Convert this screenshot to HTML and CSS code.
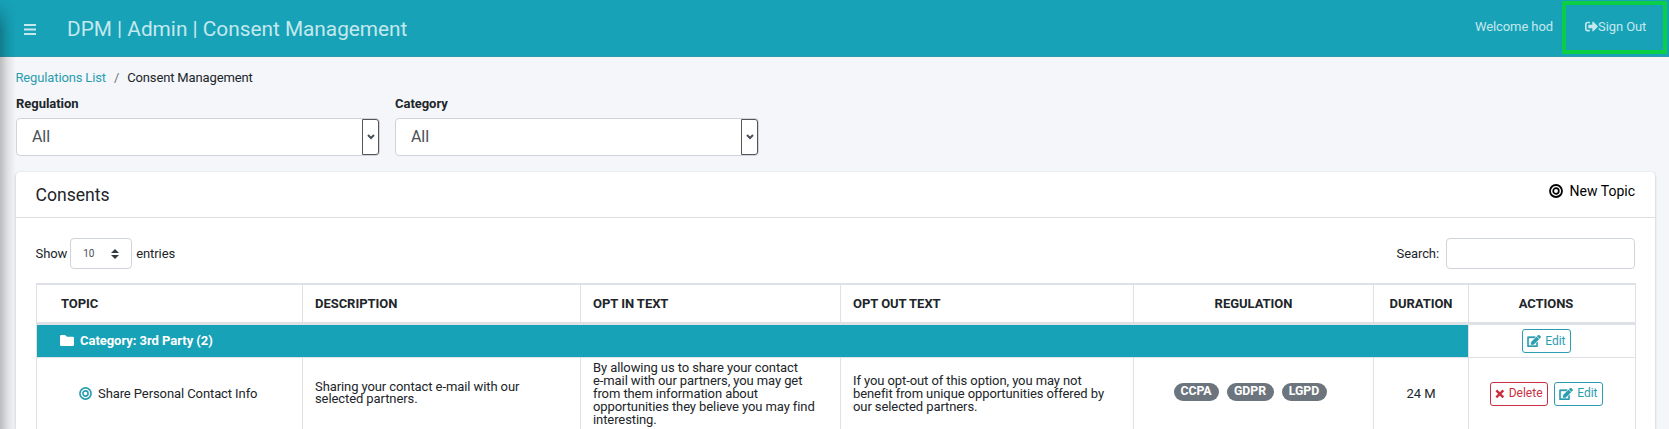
FILE: index.html
```html
<!DOCTYPE html>
<html lang="en">
<head>
<meta charset="utf-8">
<title>DPM | Admin | Consent Management</title>
<link rel="stylesheet" href="styles.css">
</head>
<body>
<svg class="defs" aria-hidden="true">
  <symbol id="target" viewBox="0 0 14 14"><g fill="none" stroke="currentColor"><circle cx="7" cy="7" r="6" stroke-width="1.8"/><circle cx="7" cy="7" r="2.8" stroke-width="1.7"/></g></symbol>
  <symbol id="edit" viewBox="0 0 576 512"><path fill="currentColor" stroke="currentColor" stroke-width="14" d="M402.6 83.2l90.2 90.2c3.8 3.8 3.8 10 0 13.8L274.4 405.6l-92.8 10.300c-12.400 1.400-22.900-9.100-21.500-21.500l10.300-92.800L388.800 83.200c3.800-3.800 10-3.800 13.800 0zm162-22.900l-48.800-48.800c-15.200-15.200-39.900-15.200-55.200 0l-35.400 35.400c-3.800 3.800-3.800 10 0 13.800l90.200 90.200c3.800 3.800 10 3.800 13.800 0l35.400-35.400c15.200-15.300 15.200-40 0-55.200zM384 346.200V448H64V128h229.800c3.200 0 6.200-1.300 8.500-3.500l40-40c7.600-7.600 2.200-20.500-8.500-20.500H48C21.500 64 0 85.500 0 112v352c0 26.500 21.500 48 48 48h352c26.500 0 48-21.500 48-48V306.200c0-10.700-12.900-16-20.500-8.500l-40 40c-2.200 2.300-3.500 5.300-3.500 8.500z"/></symbol>
</svg>
<header class="topbar">
  <svg class="menu" viewBox="0 0 12 11"><path d="M0 1h12M0 5.500h12M0 10h12" stroke="currentColor" stroke-width="2"/></svg>
  <h1 class="title">DPM | Admin | Consent Management</h1>
  <span class="welcome">Welcome hod</span>
  <a class="signout"><svg class="exit" viewBox="0 0 512 512"><path fill="currentColor" d="M497 273L329 441c-15 15-41 4.500-41-17v-96H152c-13.300 0-24-10.700-24-24v-96c0-13.300 10.700-24 24-24h136V88c0-21.400 25.900-32 41-17l168 168c9.300 9.400 9.300 24.600 0 34zM192 436v-40c0-6.600-5.400-12-12-12H96c-17.700 0-32-14.300-32-32V160c0-17.700 14.300-32 32-32h84c6.600 0 12-5.400 12-12V76c0-6.600-5.400-12-12-12H96c-53 0-96 43-96 96v192c0 53 43 96 96 96h84c6.600 0 12-5.400 12-12z"/></svg><span class="signout-text">Sign Out</span></a>
</header>
<main class="content">
  <nav class="crumbs"><a class="crumb-link">Regulations List</a><span class="sep">/</span><span>Consent Management</span></nav>
  <section class="filters">
    <div class="field"><b class="label">Regulation</b><div class="select"><span class="value">All</span><span class="drop"><svg class="chev" viewBox="0 0 8 6"><path d="M1 1l3 3 3-3" fill="none" stroke="currentColor" stroke-width="2"/></svg></span></div></div>
    <div class="field"><b class="label">Category</b><div class="select"><span class="value">All</span><span class="drop"><svg class="chev" viewBox="0 0 8 6"><path d="M1 1l3 3 3-3" fill="none" stroke="currentColor" stroke-width="2"/></svg></span></div></div>
  </section>
  <section class="card">
    <div class="card-head"><h2 class="card-title">Consents</h2><a class="new"><svg class="new-icon"><use href="#target"/></svg><span>New Topic</span></a></div>
    <div class="tools">
      <span class="show">Show</span>
      <div class="length"><span>10</span><svg class="sort" viewBox="0 0 8 10"><path d="M0 4l4-4 4 4zM0 6l4 4 4-4z" fill="currentColor"/></svg></div>
      <span class="entries">entries</span>
      <span class="search-label">Search:</span><div class="search"></div>
    </div>
    <div class="table">
      <div class="row head">
        <b class="cell first">TOPIC</b><b class="cell">DESCRIPTION</b><b class="cell">OPT IN TEXT</b><b class="cell">OPT OUT TEXT</b><b class="cell mid">REGULATION</b><b class="cell mid">DURATION</b><b class="cell actions head-actions">ACTIONS</b>
      </div>
      <div class="row group">
        <b class="cell category"><svg class="folder" viewBox="0 0 14 11"><path fill="currentColor" d="M1.300 0H5.200L6.900 1.700H12.700Q14 1.700 14 3V9.700Q14 11 12.700 11H1.300Q0 11 0 9.700V1.300Q0 0 1.300 0Z"/></svg><span>Category: 3rd Party (2)</span></b>
        <div class="cell actions"><a class="btn"><svg class="edit"><use href="#edit"/></svg><span>Edit</span></a></div>
      </div>
      <div class="row item">
        <div class="cell topic"><svg class="topic-icon"><use href="#target"/></svg><span>Share Personal Contact Info</span></div>
        <div class="cell desc">Sharing your contact e-mail with our<br>selected partners.</div>
        <div class="cell">By allowing us to share your contact<br>e-mail with our partners, you may get<br>from them information about<br>opportunities they believe you may find<br>interesting.</div>
        <div class="cell">If you opt-out of this option, you may not<br>benefit from unique opportunities offered by<br>our selected partners.</div>
        <div class="cell mid badges"><b class="badge">CCPA</b><b class="badge wide">GDPR</b><b class="badge">LGPD</b></div>
        <div class="cell mid">24 M</div>
        <div class="cell actions"><a class="btn danger"><svg class="x" viewBox="0 0 10 10"><path d="M1.300 1.300l7 7M8.300 1.300l-7 7" stroke="currentColor" stroke-width="2.400"/></svg><span>Delete</span></a><a class="btn"><svg class="edit"><use href="#edit"/></svg><span>Edit</span></a></div>
      </div>
    </div>
  </section>
</main>
<div class="edge-shadow"></div>
</body>
</html>
```
FILE: styles.css
```css
* { box-sizing: border-box; }
body { margin: 0; height: 429px; overflow: hidden; position: relative; background: #f4f6f9; color: #212529; font: 13px/13px Roboto, sans-serif; letter-spacing: -.09px; }
b { letter-spacing: -.04px; }
svg { display: block; flex: none; }
.defs { position: absolute; width: 0; height: 0; }
.topbar { display: flex; align-items: center; height: 57px; padding-left: 24px; background: #17a2b8; color: #c5e8ed; border-bottom: 1px solid #2b9bae; }
.menu { width: 12px; height: 11px; margin-top: 2px; }
.title { margin: 2px 0 0 31px; font-weight: 400; font-size: 20.800px; line-height: 30px; letter-spacing: 0; white-space: nowrap; }
.welcome { margin: -3px 9px 0 auto; }
.signout { display: flex; align-items: center; width: 105px; height: 53px; margin: 1px 2px 2px 0; padding-left: 19px; border: 4px solid #0bce47; }
.exit { width: 13px; height: 13px; margin-top: -3px; }
.signout-text { margin-top: -3px; }
.content { padding: 14px 14px 0 16px; }
.crumbs { display: flex; height: 14px; line-height: 14px; margin-left: -.5px; letter-spacing: -.14px; }
.crumb-link { color: #2b9db0; }
.sep { margin: 0 8px; color: #6c757d; }
.filters { display: flex; gap: 15px; margin-top: 12px; }
.field { width: 364px; }
.label { display: block; height: 14px; line-height: 14px; margin-bottom: 7px; }
.select { display: flex; align-items: center; height: 38px; padding: 0 0 1px 15px; border: 1px solid #ced4da; border-radius: 4px; background: #fff; color: #495057; font-size: 16px; }
.drop { display: flex; align-items: center; justify-content: center; width: 17px; height: 36px; margin: 0 0 -1px auto; border: 1px solid #555; border-radius: 0 3px 3px 0; }
.chev { width: 8px; height: 6px; }
.card { margin-top: 16px; height: 257px; background: #fff; border-radius: 4px 4px 0 0; box-shadow: 0 0 1px rgba(0,0,0,.13), 0 1px 3px rgba(0,0,0,.2); }
.card-head { display: flex; justify-content: space-between; height: 46px; padding: 0 20px 0 19.500px; border-bottom: 1px solid #dfdfdf; }
.card-title { margin: 13px 0 0; font-size: 17.600px; line-height: 20px; font-weight: 400; letter-spacing: 0; }
.new { display: flex; align-items: center; height: 20px; margin-top: 9px; gap: 7px; color: #000; font-size: 14px; letter-spacing: 0; }
.new-icon { width: 14px; height: 14px; }
.tools { display: flex; align-items: center; height: 31px; margin: 20px 20px 0 19.500px; }
.show, .entries { margin-top: -1px; }
.length { display: flex; align-items: center; width: 62px; height: 31px; margin: 0 4px 0 3px; padding: 0 12px; justify-content: space-between; border: 1px solid #ced4da; border-radius: 4px; font-size: 10px; color: #495057; }
.sort { width: 8px; height: 10px; color: #343a40; }
.search-label { margin: 0 7px 0 auto; }
.search { width: 189px; height: 31px; border: 1px solid #ced4da; border-radius: 4px; }
.table { width: 1600px; margin: 14px 0 0 20px; border-top: 2px solid #dee2e6; border-right: 1px solid #dee2e6; }
.row { display: grid; grid-template-columns: 266px 278px 260px 293px 240px 95px 167px; }
.cell { display: flex; align-items: center; border-left: 1px solid #dee2e6; padding-left: 12px; white-space: nowrap; }
.head { height: 40px; border-bottom: 3px solid #dee2e6; }
.first { padding-left: 24px; }
.mid { justify-content: center; padding-left: 0; }
.group { height: 33px; border-bottom: 1px solid #dee2e6; }
.category { grid-column: 1 / 7; padding: 0 0 1px 23px; gap: 6px; background: #17a2b8; color: #fff; }
.folder { width: 14px; height: 11px; }
.item { height: 71px; }
.topic { padding-left: 42px; gap: 6px; }
.desc { padding-bottom: 1px; line-height: 12px; }
.topic-icon { width: 13px; height: 13px; color: #2b9db0; }
.badges { gap: 8px; padding: 0 7px 4px 0; }
.badge { width: 45px; height: 18px; padding-top: 2px; border-radius: 9px; background: #6c757d; color: #fff; font-size: 12.300px; line-height: 13px; text-align: center; }
.wide { width: 47px; }
.actions { justify-content: center; padding: 0 12px 0 0; gap: 6px; }
.head-actions { padding-right: 12px; }
.btn { display: flex; align-items: center; justify-content: space-between; width: 49px; height: 24px; padding: 0 4px; border: 1px solid #2b9db0; border-radius: 3px; color: #2b9db0; font-size: 12px; letter-spacing: 0; }
.edit { width: 14px; height: 12px; overflow: visible; }
.danger { width: 58px; border-color: #c92f40; color: #c92f40; }
.x { width: 10px; height: 10px; }
.edge-shadow { position: absolute; left: 0; top: 0; width: 16px; height: 429px; background: linear-gradient(90deg, rgba(0,0,0,.24), rgba(0,0,0,.08) 50%, transparent); -webkit-mask-image: linear-gradient(transparent, #000 30px); mask-image: linear-gradient(transparent, #000 30px); }
```
